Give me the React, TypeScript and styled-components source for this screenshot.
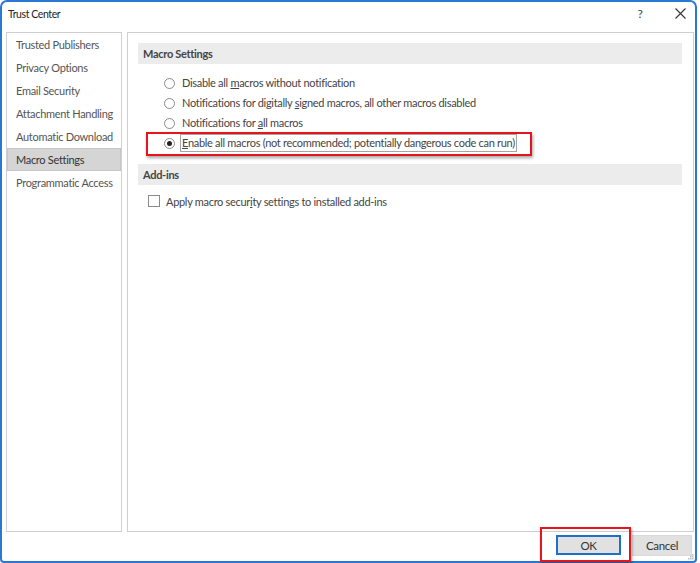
import React, { useState } from 'react';
import styled, { createGlobalStyle } from 'styled-components';

const GlobalStyle = createGlobalStyle`
  html, body {
    margin: 0;
    padding: 0;
    background: #ffffff;
  }
  body {
    font-family: Lato, 'Noto Sans', sans-serif;
    font-size: 11px;
    letter-spacing: -0.3px;
    color: #444;
  }
`;

const categories = [
  'Trusted Publishers',
  'Privacy Options',
  'Email Security',
  'Attachment Handling',
  'Automatic Download',
  'Macro Settings',
  'Programmatic Access',
];

const macroOptions = [
  { label: 'Disable all ', key: 'm', rest: 'acros without notification' },
  {
    label: 'Notifications for digitally ',
    key: 's',
    rest: 'igned macros, all other macros disabled',
  },
  { label: 'Notifications for ', key: 'a', rest: 'll macros' },
  {
    label: '',
    key: 'E',
    rest: 'nable all macros (not recommended; potentially dangerous code can run)',
  },
];

type SelectedProps = {
  selected?: boolean;
};

const App = () => {
  const [category, setCategory] = useState<string>('Macro Settings');
  const [macro, setMacro] = useState<number>(3);
  const [addins, setAddins] = useState<boolean>(false);

  return (
    <>
      <GlobalStyle />
      <Window>
        <TitleBar>
          <Title>Trust Center</Title>
          <TitleButtons>
            <HelpButton>?</HelpButton>
            <CloseButton>
              <svg width='11' height='11' viewBox='0 0 11 11'>
                <path
                  d='M0.5 0.5 L10.5 10.5 M10.5 0.5 L0.5 10.5'
                  stroke='#333'
                  strokeWidth='1.1'
                  fill='none'
                />
              </svg>
            </CloseButton>
          </TitleButtons>
        </TitleBar>
        <Body>
          <NavPanel>
            {categories.map((c) => (
              <NavItem
                key={c}
                selected={c === category}
                onClick={() => setCategory(c)}
              >
                {c}
              </NavItem>
            ))}
          </NavPanel>
          <ContentPanel>
            <SectionHeader>Macro Settings</SectionHeader>
            <OptionList>
              {macroOptions.map((o, i) => (
                <OptionRow
                  key={i}
                  highlighted={i === 3}
                  onClick={() => setMacro(i)}
                >
                  <Radio selected={macro === i} />
                  <OptionText selected={macro === i}>
                    {o.label}
                    <u>{o.key}</u>
                    {o.rest}
                  </OptionText>
                </OptionRow>
              ))}
            </OptionList>
            <SectionHeader>Add-ins</SectionHeader>
            <CheckRow onClick={() => setAddins(!addins)}>
              <CheckBox selected={addins} />
              <span>
                Apply macro secur<u>i</u>ty settings to installed add-ins
              </span>
            </CheckRow>
          </ContentPanel>
        </Body>
        <Footer>
          <OkWrap>
            <OkButton>OK</OkButton>
          </OkWrap>
          <CancelButton>Cancel</CancelButton>
          <Grip>
            <svg width='6' height='6' viewBox='0 0 6 6'>
              <rect x='4' y='0' width='1.5' height='1.5' fill='#bbb' />
              <rect x='2' y='2' width='1.5' height='1.5' fill='#bbb' />
              <rect x='4' y='2' width='1.5' height='1.5' fill='#bbb' />
              <rect x='0' y='4' width='1.5' height='1.5' fill='#bbb' />
              <rect x='2' y='4' width='1.5' height='1.5' fill='#bbb' />
              <rect x='4' y='4' width='1.5' height='1.5' fill='#bbb' />
            </svg>
          </Grip>
        </Footer>
      </Window>
    </>
  );
};

const Window = styled.div`
  position: relative;
  box-sizing: border-box;
  width: 697px;
  height: 563px;
  border: 2px solid #2b78d2;
  border-radius: 7px 7px 4px 4px;
  background: #fff;
  display: flex;
  flex-direction: column;
`;

const TitleBar = styled.div`
  height: 30px;
  display: flex;
  align-items: center;
  justify-content: space-between;
  padding: 0 0 0 6px;
  flex-shrink: 0;
`;

const Title = styled.div`
  font-size: 10.5px;
  letter-spacing: -0.4px;
  color: #222;
  margin-top: -6px;
`;

const TitleButtons = styled.div`
  display: flex;
  align-items: center;
  margin-top: -7px;
`;

const HelpButton = styled.div`
  width: 40px;
  margin-right: 5px;
  text-align: center;
  font-size: 12px;
  color: #444;
`;

const CloseButton = styled.div`
  width: 30px;
  display: flex;
  justify-content: center;
`;

const Body = styled.div`
  display: flex;
  gap: 5px;
  padding: 0 0 0 4px;
  height: 500px;
  flex-shrink: 0;
`;

const NavPanel = styled.div`
  box-sizing: border-box;
  width: 116px;
  height: 100%;
  border: 1px solid #cfcfcf;
  display: flex;
  flex-direction: column;
`;

const NavItem = styled.div<SelectedProps>`
  height: 23px;
  line-height: 23px;
  padding-left: 9px;
  white-space: nowrap;
  color: ${(p) => (p.selected ? '#333' : '#555')};
  background: ${(p) => (p.selected ? '#d5d5d5' : 'transparent')};
  box-shadow: ${(p) => (p.selected ? 'inset 0 0 0 1px #c6c6c6' : 'none')};
  cursor: pointer;
`;

const ContentPanel = styled.div`
  box-sizing: border-box;
  width: 567px;
  height: 100%;
  border: 1px solid #cfcfcf;
  padding: 10px 11px 0 10px;
  display: flex;
  flex-direction: column;
`;

const SectionHeader = styled.div`
  height: 21px;
  line-height: 21px;
  background: #ececec;
  padding-left: 5px;
  font-weight: 700;
  color: #444;
`;

const OptionList = styled.div`
  display: flex;
  flex-direction: column;
  padding: 9px 0 11px 26px;
`;

const OptionRow = styled.div<{ highlighted?: boolean }>`
  position: relative;
  height: 20px;
  display: flex;
  align-items: center;
  gap: 6px;
  cursor: pointer;
  &::after {
    content: '';
    display: ${(p) => (p.highlighted ? 'block' : 'none')};
    position: absolute;
    left: -18px;
    top: -1px;
    width: 382px;
    height: 20px;
    border: 2px solid #e8141c;
    box-shadow: 1px 2px 3px rgba(0, 0, 0, 0.35);
    pointer-events: none;
  }
`;

const Radio = styled.span<SelectedProps>`
  box-sizing: border-box;
  width: 11px;
  height: 11px;
  border-radius: 50%;
  border: 1px solid #8a8a8a;
  background: #fff;
  display: flex;
  align-items: center;
  justify-content: center;
  flex-shrink: 0;
  &::before {
    content: '';
    width: 5px;
    height: 5px;
    border-radius: 50%;
    background: #222;
    display: ${(p) => (p.selected ? 'block' : 'none')};
  }
`;

const OptionText = styled.span<SelectedProps>`
  box-sizing: border-box;
  height: 18px;
  line-height: 16px;
  padding: 0 1px;
  margin-left: -1px;
  border: 1px solid ${(p) => (p.selected ? '#a5a5a5' : 'transparent')};
  white-space: nowrap;
  color: #444;
`;

const CheckRow = styled.div`
  display: flex;
  align-items: center;
  gap: 6px;
  margin: 10px 0 0 10px;
  height: 12px;
  cursor: pointer;
  color: #444;
`;

const CheckBox = styled.span<SelectedProps>`
  box-sizing: border-box;
  width: 12px;
  height: 12px;
  border: 1px solid #8a8a8a;
  background: ${(p) => (p.selected ? '#2b78d2' : '#fff')};
  flex-shrink: 0;
`;

const Footer = styled.div`
  position: relative;
  flex: 1;
  display: flex;
  align-items: flex-start;
  justify-content: flex-end;
  padding: 3px 3px 0 0;
  gap: 11px;
`;

const OkWrap = styled.div`
  position: relative;
  &::after {
    content: '';
    position: absolute;
    left: -16px;
    top: -8px;
    width: 87px;
    height: 31px;
    border: 2px solid #e8141c;
    box-shadow: 1px 2px 3px rgba(0, 0, 0, 0.35);
    pointer-events: none;
  }
`;

const OkButton = styled.button`
  box-sizing: border-box;
  width: 65px;
  height: 20px;
  border: 2px solid #1f6fc9;
  background: #e1e1e1;
  font-family: inherit;
  font-size: 11.5px;
  letter-spacing: inherit;
  color: #333;
  padding: 0;
`;

const CancelButton = styled.button`
  box-sizing: border-box;
  width: 60px;
  height: 21px;
  border: 1px solid #dadada;
  background: #e1e1e1;
  font-family: inherit;
  font-size: 11.5px;
  letter-spacing: inherit;
  color: #333;
  padding: 0;
`;

const Grip = styled.div`
  position: absolute;
  right: 1px;
  bottom: 1px;
  display: flex;
`;

export default App;
